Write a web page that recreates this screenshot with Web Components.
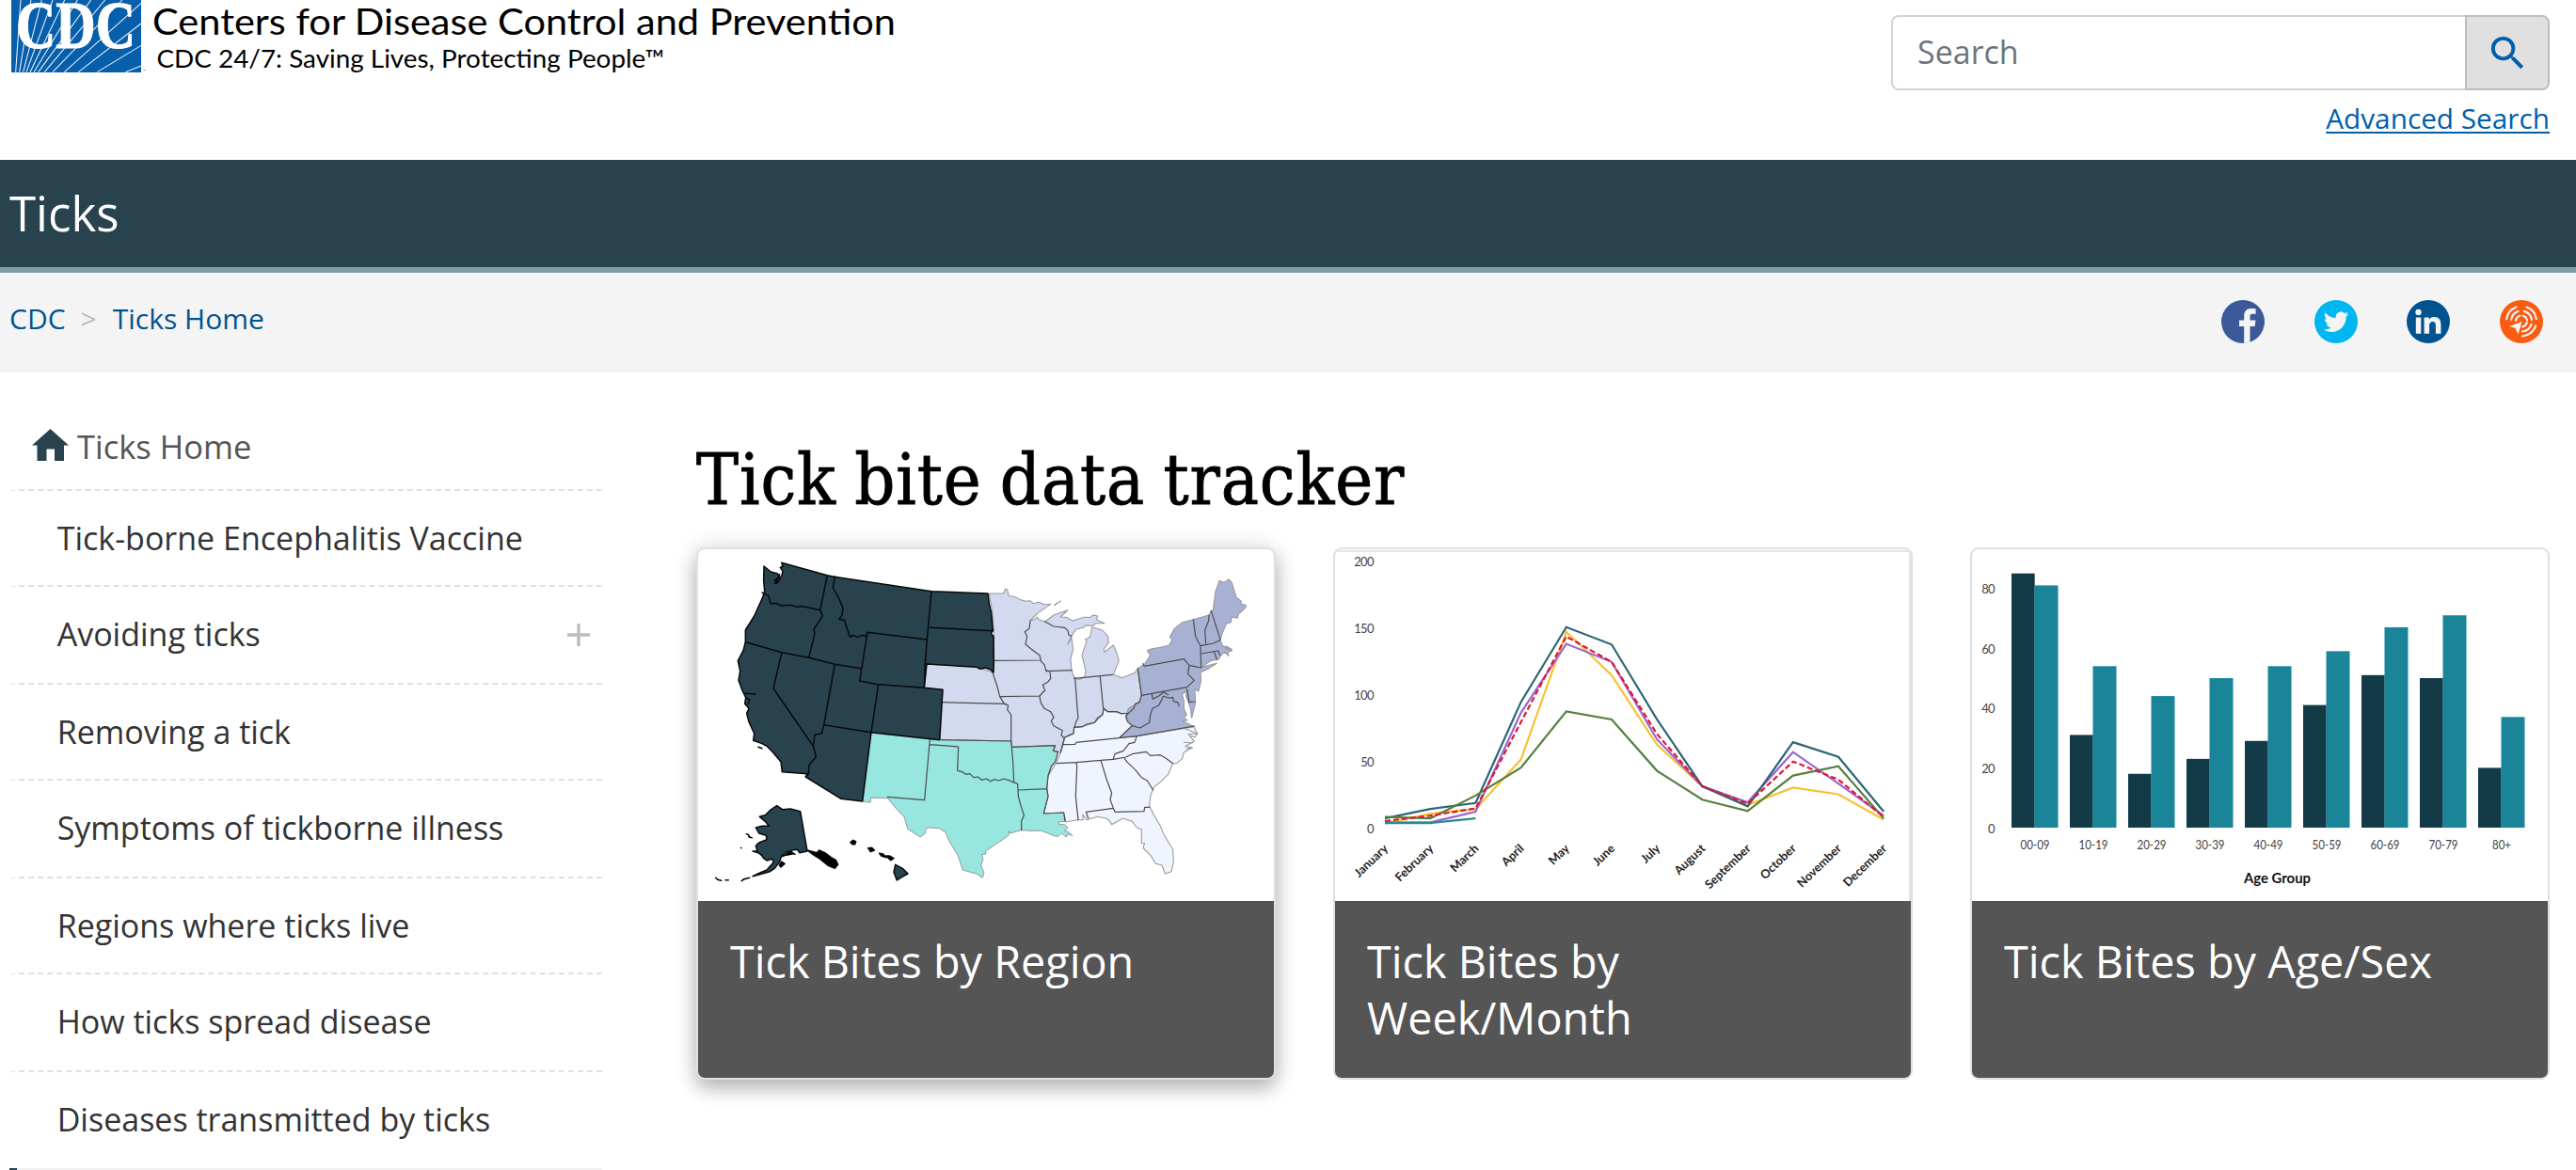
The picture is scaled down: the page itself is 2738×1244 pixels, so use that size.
<!DOCTYPE html>
<html lang="en">
<head>
<meta charset="utf-8">
<title>Tick bite data tracker</title>
<style>
html,body{margin:0;height:1244px;overflow:hidden;background:#fff}
body{font-family:"Open Sans","Noto Sans",sans-serif;font-size:34px;color:#333}
</style>
</head>
<body>
<tick-page></tick-page>
<script>
const define=(name,html,setup)=>customElements.define(name,class extends HTMLElement{
  constructor(){super();this.attachShadow({mode:'open'}).innerHTML=typeof html==='function'?html(this):html;}
  connectedCallback(){if(setup)setup(this);}
});

/* ---------- header ---------- */
define('cdc-logo',`<style>:host{display:block;width:960px;height:90px}svg{display:block}</style>
<svg width="960" height="90" viewBox="0 0 960 90" font-family="Lato,sans-serif">
<rect x="12" y="0" width="138" height="77" fill="#075eaa"/>
<g transform="scale(.33333)" stroke="#e8f1fa" stroke-width="3.2" fill="none">
<path d="M66 0 50 230M99 0 62 230M133 0 74 230M168 0 84 230M206 0 96 230M247 0 108 230M290 0 122 230M335 0 142 230M390 0 168 230M450 10 205 230M450 75 250 230M450 145 310 230M450 210 400 230"/></g>
<text x="17" y="51" font-family="'Liberation Serif',serif" font-weight="700" font-size="71" fill="#fff" stroke="#fff" stroke-width="1.2" textLength="127" lengthAdjust="spacingAndGlyphs">CDC</text>
<text x="152" y="77" font-size="4" fill="#075eaa">™</text>
<text x="162" y="36.5" font-size="39.5" fill="#000" textLength="790" lengthAdjust="spacingAndGlyphs">Centers for Disease Control and Prevention</text>
<text x="166.500" y="72.300" font-size="26.500" fill="#000" textLength="540" lengthAdjust="spacingAndGlyphs">CDC 24/7: Saving Lives, Protecting People™</text>
</svg>`);
define('search-box',`<style>
:host{display:flex;flex-direction:column;align-items:flex-end;width:700px}
.row{display:flex;width:700px;height:80px}
.in{flex:1;box-sizing:border-box;border:2px solid #ced4da;border-right:0;border-radius:8px 0 0 8px;padding:12px 0 0 26px;line-height:51px;color:#6c757d}
.btn{width:90px;box-sizing:border-box;border:2px solid #bdbdbd;border-radius:0 8px 8px 0;background:#e0e0e0;display:flex;align-items:center;justify-content:center}
a{font-size:29.750px;line-height:44px;margin-top:8px;color:#005eaa;text-decoration:underline;text-decoration-thickness:2px;text-underline-offset:3px}
</style><div class="row"><div class="in">Search</div><div class="btn"><svg width="47" height="47" viewBox="0 0 24 24"><path fill="#005eaa" d="M15.500 14h-.79l-.28-.27A6.470 6.470 0 0 0 16 9.500 6.500 6.500 0 1 0 9.500 16c1.610 0 3.090-.59 4.230-1.570l.27.28v.79l5 4.990L20.490 19l-4.990-5zm-6 0C7.010 14 5 11.990 5 9.500S7.010 5 9.500 5 14 7.010 14 9.500 11.990 14 9.500 14z"/></svg></div></div><a>Advanced Search</a>`);
define('site-header',`<style>:host{display:flex;flex-shrink:0;justify-content:space-between;box-sizing:border-box;height:170px;padding-right:28px}search-box{margin-top:16px}</style><cdc-logo></cdc-logo><search-box></search-box>`);
define('site-banner',`<style>:host{display:block;flex-shrink:0;box-sizing:border-box;height:120px;background:#29434e;border-bottom:6px solid #7e9ba5;padding:18px 10px 0;color:#fff;font-size:51px;line-height:76px}</style><slot></slot>`);

/* ---------- breadcrumb and share links ---------- */
const wedge=(r,a,b)=>{const p=t=>[(r*Math.cos(t*Math.PI/180)).toFixed(2),(-r*Math.sin(t*Math.PI/180)).toFixed(2)];const s=p(a),e=p(b);return `M${s}A${r} ${r} 0 0 0 ${e}`;};
const glyphs={
facebook:['#3b5998','<path fill="#f4f4f4" d="M24.200 46V28H19v-6.500h5.200v-4.600C24.200 11.600 27.300 9 32 9c2 0 3.800.1 4.600.2v5.600h-3.200c-2.300 0-2.900 1.200-2.900 2.900v3.800h6l-.9 6.500h-5.100V45.200z"/>'],
twitter:['#00b6f1','<g transform="translate(7.800 7.300) scale(1.270)"><path fill="#f4f4f4" d="M22.460 6c-.77.350-1.600.58-2.460.69.880-.53 1.560-1.370 1.880-2.380-.83.500-1.750.850-2.720 1.050C18.370 4.500 17.260 4 16 4c-2.350 0-4.270 1.920-4.270 4.290 0 .34.040.67.110.98C8.280 9.090 5.110 7.380 3 4.790c-.37.630-.58 1.370-.58 2.150 0 1.490.75 2.810 1.910 3.560-.71 0-1.370-.2-1.950-.5v.03c0 2.080 1.480 3.820 3.440 4.210a4.220 4.220 0 0 1-1.930.07 4.280 4.280 0 0 0 4 2.980 8.521 8.521 0 0 1-5.330 1.840c-.34 0-.68-.02-1.020-.06C3.440 20.290 5.700 21 8.120 21 16 21 20.330 14.460 20.330 8.790c0-.19 0-.37-.01-.56.84-.6 1.560-1.360 2.140-2.230z"/></g>'],
linkedin:['#00538f','<g fill="#f4f4f4"><circle cx="12.500" cy="13" r="3.200"/><path d="M9.800 18.500h5.500v17.300H9.800zM18.600 18.500h5.200v2.400c1-1.700 2.900-2.800 5.400-2.800 5.400 0 7.200 3.200 7.200 8.200v9.500h-5.500v-8.700c0-2.600-.8-4.200-3.100-4.200-2.600 0-3.700 1.800-3.700 4.400v8.500h-5.500z"/></g>'],
syndicate:['#fa5c11',`<g transform="translate(23 22.500)" fill="none" stroke="#f4f4f4" stroke-width="2.100" stroke-linecap="round"><path d="${wedge(6,105,172)}${wedge(11,108,172)}${wedge(16,110,172)}${wedge(6,8,75)}${wedge(11,8,75)}${wedge(16,8,70)}${wedge(6,-80,-15)}${wedge(11,-85,-17)}${wedge(16,-87,-18)}"/><path fill="#f4f4f4" stroke="none" d="M.5 .5-13 5.500l6.500 1.800L-3.500 14z"/></g>`]};
define('share-icon',el=>{const g=glyphs[el.getAttribute('kind')];return `<style>:host,svg{display:block}</style><svg width="46" height="46" viewBox="0 0 46 46"><circle cx="23" cy="23" r="23" fill="${g[0]}"/>${g[1]}</svg>`;});
define('crumb-bar',`<style>
:host{display:flex;flex-shrink:0;justify-content:space-between;box-sizing:border-box;height:106px;background:#f4f4f4;padding:0 35px 0 10px;font-size:30px;line-height:44px;color:#005390}
nav{display:flex;padding-top:27px}i{font-style:normal;color:#bbb;margin:0 17px 0 16px}
.share{display:flex;gap:52.700px;padding-top:29px}
</style><nav><span>CDC</span><i>&gt;</i><span>Ticks Home</span></nav><div class="share"></div>`,
el=>{for(const k in glyphs){const n=document.createElement('div');n.innerHTML=`<share-icon kind="${k}"></share-icon>`;el.shadowRoot.querySelector('.share').append(n.firstChild);}});

/* ---------- side navigation ---------- */
define('nav-item',`<style>
:host{display:flex;flex-shrink:0;justify-content:space-between;box-sizing:border-box;height:102px;border-left:8px solid transparent;border-bottom:2px dashed #e0e0e0;padding:25px 13px 0 42.700px;line-height:51px;color:#333}
:host([tall]){height:104px}
:host([home]){height:98px;padding:25px 13px 0 15px;color:#555;justify-content:flex-start;font-size:34.500px}
:host([current]){background:#f2f2f2;border-bottom:0;border-left-color:#29434e;height:104px}
svg{display:none}:host([home]) .h{display:block;margin:7px 9px 0 1px}:host([more]) .p{display:block;margin-top:14px}
</style><svg class="h" width="39" height="34" viewBox="0 0 39 34"><path fill="#29434e" d="M19.500 0 39 17.500H34V34H24V21.500H15.500V34H5.500V17.500H0z"/></svg><slot></slot><svg class="p" width="24" height="24" viewBox="0 0 24 24"><path stroke="#bdbdbd" stroke-width="3.400" d="M0 12H24M12 0V24"/></svg>`);
define('side-nav',`<style>:host{display:flex;flex-direction:column;width:630px;padding:28px 0 0 10px}</style>
<nav-item home>Ticks Home</nav-item><nav-item>Tick-borne Encephalitis Vaccine</nav-item><nav-item tall more>Avoiding ticks</nav-item><nav-item>Removing a tick</nav-item><nav-item tall>Symptoms of tickborne illness</nav-item><nav-item>Regions where ticks live</nav-item><nav-item tall>How ticks spread disease</nav-item><nav-item style="border-bottom-color:transparent">Diseases transmitted by ticks</nav-item><nav-item current></nav-item>`);

/* ---------- card pictures ---------- */
define('region-map',`<style>:host,svg{display:block}</style><svg width="612" height="374" viewBox="0 0 612 374"><g transform="translate(18 -4) scale(.33333)" stroke-linejoin="round" stroke-linecap="round">
<g transform="translate(840 0)" stroke="#999" stroke-width="3.200">
<path fill="#eff4fe" d="M400 520 412 530 440 530 455 536 478 535 470 545 490 575 450 613 505 608 685 575 698 600 690 612 672 605 688 625 660 640 682 645 655 660 650 680 632 695 620 695 605 730 580 755 560 770 548 800 545 832 560 860 580 895 590 920 620 970 622 1010 615 1040 595 1047 585 1020 565 1015 550 990 525 965 530 950 520 950 520 905 505 900 490 880 460 870 425 890 415 875 405 870 380 865 345 875 332 858 334 875 318 875 290 880 278 882 272 852 208 855 222 800 218 775 222 735 250 690 262 660 270 635 275 612 303 600 305 580 330 578 370 565 395 540Z"/>
<path fill="#d3daf0" d="M34 153 80 153 86 138 92 140 96 160 118 164 130 172 150 178 165 176 175 185 192 181 210 188 230 187 190 215 165 240 182 235 187 228 192 236 212 243 240 222 285 206 262 228 280 229 300 240 340 228 355 230 365 222 380 225 376 236 402 248 372 248 366 256 340 255 335 262 310 268 295 290 285 315 297 295 302 330 294 360 297 398 305 420 320 428 338 420 342 400 330 350 345 305 340 300 356 292 362 260 395 270 413 290 415 310 400 330 402 340 430 318 440 340 448 368 430 412 458 422 500 405 508 392 520 478 513 500 478 535 455 536 440 530 412 530 400 520 395 540 370 565 330 578 305 580 303 600 275 612 270 635 262 660 240 655 245 638 106 643 104 624 -122 620 -114 460 -173 454 -165 378 -5 388 45 405 50 290 45 215Z"/>
<path d="M242 190 262 177" stroke-width="4"/>
<path fill="#a7b1d4" d="M508 392 530 378 548 350 538 335 550 330 580 325 608 318 618 300 610 292 625 265 650 245 685 236 735 222 742 208 748 208 755 150 768 112 782 118 798 108 808 118 822 165 838 178 836 185 855 192 845 205 830 218 825 232 808 228 805 245 790 250 780 275 770 300 778 318 795 332 788 320 806 330 808 336 795 340 798 352 785 340 775 348 766 363 740 368 712 388 760 376 735 392 708 405 710 430 702 465 690 458 692 500 688 518 680 550 676 520 662 480 664 462 650 475 656 500 655 520 664 540 655 550 666 558 650 560 672 570 688 578 505 608 450 613 490 575 470 545 478 520 513 500 520 478Z"/>
<path fill="none" d="M660 585 698 600 668 602M655 628 682 630M662 648 682 645M790 328 808 334"/>
</g>
<path fill="#97e6df" stroke="#999" stroke-width="3" d="M498 598 718 620 944 624 946 643 1085 638 1078 655 1094 658 1085 690 1072 705 1062 735 1058 775 1062 800 1048 855 1112 852 1118 880 1096 882 1096 890 1115 890 1125 900 1115 910 1128 914 1140 926 1125 920 1120 930 1105 918 1095 928 1080 926 1062 918 1040 910 1010 910 975 908 942 918 938 910 936 925 900 950 870 970 862 975 864 984 850 985 855 1000 848 1020 858 1045 852 1060 836 1048 790 1035 775 990 745 940 735 915 715 902 680 900 672 905 670 918 655 930 615 905 603 865 585 848 550 806 497 805 495 820 472 816Z"/>
<path fill="none" stroke="#4d4d4d" stroke-width="3.600" d="M685 620 668 812 550 802M685 635 776 642 773 718 788 722 800 730 812 728 825 740 838 738 850 748 865 744 878 752 890 746 905 750 920 744 935 748 950 755 965 760 967 800 975 830 985 860 977 880 977 908M944 624 946 643 950 690 953 755M967 780 1058 776M946 643 1085 638 1078 655 1094 658 1085 690 1072 705 1062 735 1058 775 1062 800 1048 855 1112 852 1116 878"/>
<g transform="translate(840 0)" fill="none" stroke="#4d4d4d" stroke-width="3.600">
<path d="M165 240 162 265 148 275 155 290 150 315 168 330 195 350 200 370 210 380 215 398 228 402 230 425 222 435 205 445 212 462 195 480 198 500 210 520 230 530 240 548 232 560 240 575 268 590 264 605 274 615 268 635 262 660M50 367 197 366M68 482 195 480M215 401 298 398M212 243 240 258 275 262 285 272 288 285 298 290M308 422 316 530 318 550 310 565 306 580M388 418 398 520M305 424 428 412M-118 500 88 505M45 405 60 450 68 482 82 505 95 510 92 524 104 540 104 624-118 620M508 392 520 478 513 500 500 505 495 520 478 535 455 536 440 530 412 530 400 520 395 540 380 550 370 565 345 570 330 578 305 580 303 600 290 605 275 612"/>
<path d="M525 376 528 385 655 362 672 382 708 390M672 382 668 410 688 430 665 452M520 478 665 452M685 236 692 290 708 320 710 390M735 222 734 240 722 270 725 312M742 208 768 290 772 300M708 320 750 312 770 302M708 345 765 336 770 350M752 340 760 364M478 535 470 545 475 562 490 575 515 582 532 572 545 565 548 540 555 520 575 510 590 480 605 486 620 485 622 497 635 500 640 512M553 475 556 490 575 480 590 468 605 476M665 458 672 500 690 498M490 575 450 613M688 576 505 608 312 628 308 634 270 635M250 695 312 692 390 685 430 682 470 675 490 665 535 658 548 670 580 668 600 680 620 695M505 608 498 628 480 632 462 655 435 665 430 680M466 680 475 692 500 715 520 740 538 750 557 780M312 692 314 705 310 800 318 875M390 685 410 750 425 790 420 810 430 838 343 850 350 870M430 838 435 850 528 848 530 835 545 835"/></g>
<g stroke="#06090b" stroke-width="4.500">
<path fill="#29434e" d="M156 66 178 84 200 90 205 100 190 122 200 118 213 95 216 82 208 70 216 66 212 55 358 95 380 100 690 146 870 153 874 185 881 215 886 272 880 280 888 290 889 375 888 405 878 396 862 390 845 394 835 388 675 378 667 454 726 460 716 620 498 596 470 816 402 808 289 738 294 728 214 722 210 690 185 660 165 640 150 632 122 622 125 600 107 560 101 535 108 520 95 505 98 485 88 465 75 430 80 400 73 368 90 335 97 308 97 270 125 225 150 170 158 148 155 110Z"/>
<path fill="none" d="M150 150 170 160 178 186 195 184 210 192 240 190 262 196 280 194 335 206M358 95 335 206 343 224 315 268 318 280 299 358M382 98 376 135 396 170 408 200 405 222 395 235 412 238 420 262 430 292 440 286 455 292 470 286 482 290 486 277M97 308 213 341 299 358 382 379 465 392M486 277 676 300M486 277 461 432 521 443 667 454M690 146 676 300 670 378 667 454M685 262 886 272M213 341 186 456 313 640M382 379 347 572 340 600 318 604 313 640 322 675 300 700 298 728 289 738M347 572 498 596M521 443 498 596M95 472 130 474M98 485 110 492 106 505M206 92 196 120M190 112 204 100"/>
<path fill="#29434e" d="M197 830 215 842 240 840 272 848 294 975 270 980 262 970 245 972 235 985 230 975 212 990 205 1010 190 1030 175 1040 148 1048 120 1055 140 1045 165 1035 187 1010 182 1000 165 1005 155 998 150 990 138 980 120 975 135 975 130 958 140 948 165 938 163 925 140 918 130 900 150 895 172 895 160 880 142 865 160 860 175 845Z"/>
<path fill="#000" d="M294 972 325 980 332 972 350 980 370 995 385 1003 392 1018 382 1030 362 1022 335 1000 310 984ZM205 1020 212 1008 222 1015 210 1026ZM215 992 240 975 255 985M100 920 108 924 108 930 118 932M2 1060 8 1066 20 1069M33 1067 43 1067M85 1070 92 1064 110 1060M83 964 84 965M138 643 150 647M432 947 440 940 449 944 446 953 438 953ZM488 965 500 964 508 972 496 977ZM524 982 536 984 546 995 530 990ZM545 990 556 990 570 998 560 1004Z"/>
<path fill="#29434e" d="M575 1018 598 1030 615 1047 595 1058 580 1068 570 1042Z"/></g>
</g></svg>`);

define('line-chart',()=>{
 const months='January February March April May June July August September October November December'.split(' ');
 const X=i=>53+i*48.2,Y=v=>(297.5-1.422*v).toFixed(1);
 const S=[['#f7c331',[4,11.5,15,52,147.5,115,63,32,18,31,26,7]],['#9c66cf',[5,5,13,87,138.5,125,67,32,20,57.5,34,10]],['#2b6675',[8,15,19.5,95,151,138,82,32,17,65,54,13]],['#55803f',[9,8,25,46,88,82,43.5,22,13.5,40,47,8]],['#288a94',[4.500,4.500,8]],['#e3152f',[6,10,15.5,80,144,125,71,32,19,50.5,37,9],'6 3']];
 return `<style>:host,svg{display:block}</style><svg width="612" height="374" viewBox="0 0 612 374" font-family="Lato,sans-serif" font-size="13" fill="#444"><path d="M0 2H612M611 0V374" stroke="#ddd" stroke-width="1.500"/>`
 +[0,50,100,150,200].map(v=>`<text x="41.500" y="${+Y(v)+4.5}" text-anchor="end" textLength="${String(v).length*7.1}">${v}</text>`).join('')
 +S.map(s=>`<polyline fill="none" stroke="${s[0]}" stroke-width="2.2" ${s[2]?`stroke-dasharray="${s[2]}"`:''} points="${s[1].map((v,i)=>X(i).toFixed(1)+','+Y(v)).join(' ')}"/>`).join('')
 +months.map((m,i)=>`<text transform="translate(${(X(i)+4).toFixed(1)} 319) rotate(-44)" text-anchor="end" font-weight="700" font-size="12.700" fill="#222">${m}</text>`).join('')+'</svg>';});

define('bar-chart',()=>{
 const A=[85,31,18,23,29,41,51,50,20],B=[81,54,44,50,54,59,67,71,37],L=['00-09','10-19','20-29','30-39','40-49','50-59','60-69','70-79','80+'];
 return `<style>:host,svg{display:block}</style><svg width="612" height="374" viewBox="0 0 612 374" font-family="Lato,sans-serif" font-size="13" fill="#444">`
 +[0,20,40,60,80].map(v=>`<text x="24.500" y="${301.5-v*3.18}" text-anchor="end" textLength="${String(v).length*7.1}">${v}</text>`).join('')
 +L.map((t,i)=>{const x=42+i*62,h=3.18;return `<rect x="${x}" y="${296-A[i]*h}" width="24.700" height="${A[i]*h}" fill="#123b47"/><rect x="${x+24.5}" y="${296-B[i]*h}" width="25" height="${B[i]*h}" fill="#1a8599"/><text x="${x+25}" y="318.500" text-anchor="middle" textLength="${t.length>3?31:20}" lengthAdjust="spacingAndGlyphs">${t}</text>`;}).join('')
 +`<text x="324.500" y="354.500" text-anchor="middle" font-size="15" font-weight="700" fill="#111" textLength="71" lengthAdjust="spacingAndGlyphs">Age Group</text></svg>`;});

/* ---------- cards ---------- */
define('tracker-card',`<style>
:host{display:flex;flex-direction:column;box-sizing:border-box;height:566px;border:2px solid #e0e0e0;border-radius:9px;background:#fff;background-clip:padding-box}
:host([raised]){box-shadow:0 10px 20px rgba(0,0,0,.24),0 0 26px rgba(0,0,0,.12)}
.pic{height:374px;overflow:hidden;border-radius:7px 7px 0 0}
h2{flex:1;margin:0;background:#555;color:#fff;font-weight:400;font-size:46.750px;line-height:60px;padding:34px 34px 0;border-radius:0 0 7px 7px}
</style><div class="pic"><slot name="picture"></slot></div><h2><slot></slot></h2>`);
define('card-row',`<style>:host{display:grid;grid-template-columns:repeat(3,616px);gap:61px}</style>
<tracker-card raised><region-map slot="picture"></region-map>Tick Bites by Region</tracker-card>
<tracker-card><line-chart slot="picture"></line-chart>Tick Bites by Week/Month</tracker-card>
<tracker-card><bar-chart slot="picture"></bar-chart>Tick Bites by Age/Sex</tracker-card>`);
define('tick-page',`<style>
:host{display:flex;flex-direction:column;height:1244px;overflow:hidden}
main{display:flex;flex-shrink:0;gap:100px}
section{display:flex;flex-direction:column;padding-top:66px}
h1{margin:0;height:120px;font:400 75px/96px "DejaVu Serif Condensed","DejaVu Serif",serif;font-stretch:condensed;letter-spacing:.9px;word-spacing:-3px;-webkit-text-stroke:.9px #000;color:#000;white-space:nowrap}
</style><site-header></site-header><site-banner>Ticks</site-banner><crumb-bar></crumb-bar>
<main><side-nav></side-nav><section><h1>Tick bite data tracker</h1><card-row></card-row></section></main>`);
</script>
</body>
</html>
